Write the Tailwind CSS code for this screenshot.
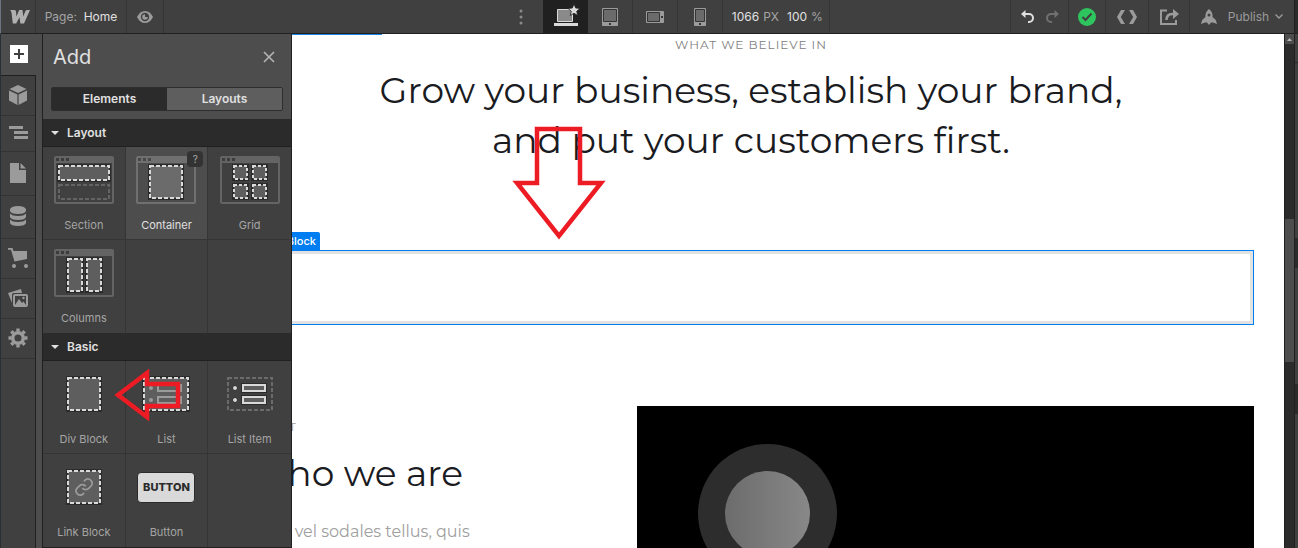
<!DOCTYPE html>
<html lang="en">

<head>
    <meta charset="UTF-8">
    <meta name="viewport" content="width=device-width, initial-scale=1.0">
    <title>Designer - Home</title>
    <script src="https://cdn.jsdelivr.net/npm/@tailwindcss/browser@4"></script>
</head>

<body class="h-screen overflow-hidden flex flex-col bg-[#404040] font-['Inter',sans-serif] text-xs text-[#e0e0e0]">
    <!-- Top bar -->
    <header class="flex h-[34px] shrink-0 border-b border-[#202020] border-l-1 border-l-[#6b7480] bg-[#404040]">
        <button class="flex w-[35px] items-center justify-center border-r border-[#353535] pl-1" aria-label="Menu">
            <svg class="h-4 w-5" viewBox="0 0 20 16" fill="#b0b0b0"><path d="M0 1h4.500q1.300 0 1.500 1.500l.4 5 2.800-6.500h3.300l.8 6.500 2-5.200Q16.100 1 17.500 1H20l-6 13.500h-3.600l-.9-6.200-3.300 6.200H2.800L1.600 4.200Q1.400 2.100 0 1z"/></svg>
        </button>
        <button class="w-[91px] border-r border-[#353535]"><span class="text-[#a5a5a5]">Page:</span>&nbsp; Home</button>
        <button class="flex w-[37px] items-center justify-center border-r border-[#353535]" aria-label="Preview">
            <svg class="h-3 w-4" viewBox="0 0 16 12"><path d="M0 6Q3 0 8 0t8 6q-3 6-8 6T0 6z" fill="#9b9b9b"/><circle cx="8" cy="6" r="4.200" fill="#404040"/><path d="M8 3.200a2.800 2.800 0 1 0 2.800 2.800H8z" fill="#9b9b9b"/></svg>
        </button>
        <div class="flex grow-[19] basis-0 items-center justify-end">
            <button class="mr-5" aria-label="More">
                <svg class="h-4 w-1" viewBox="0 0 4 16" fill="#8a8a8a"><circle cx="2" cy="2" r="1.500"/><circle cx="2" cy="8" r="1.500"/><circle cx="2" cy="14" r="1.500"/></svg>
            </button>
        </div>
        <button class="flex w-[45px] items-center justify-center bg-[#202020]" aria-label="Desktop">
            <svg class="mb-1 h-[22px] w-7" viewBox="0 0 28 22"><path d="M5.500 5.500h15v12h-15z" fill="#8a8a8a" stroke="#d9d9d9"/><path d="M2 19h24v3H2z" fill="#d9d9d9"/><path d="m22 0 1.700 4 4.300.4-3.300 2.900 1 4.200-3.700-2.200-3.700 2.200 1-4.200L16 4.400l4.300-.4z" fill="#d9d9d9" stroke="#202020" stroke-width=".8"/></svg>
        </button>
        <button class="flex w-[45px] items-center justify-center border-r border-[#353535]" aria-label="Tablet">
            <svg class="h-[18px] w-4" viewBox="0 0 16 18"><rect width="16" height="18" rx="1" fill="#9b9b9b"/><path d="M1.500 1.500h13v12h-13z" fill="#6b6b6b" stroke="#353535"/><path d="M7 15h2v2H7z" fill="#353535"/></svg>
        </button>
        <button class="flex w-[45px] items-center justify-center border-r border-[#353535]" aria-label="Mobile landscape">
            <svg class="h-3 w-[18px]" viewBox="0 0 18 12"><rect width="18" height="12" rx="1" fill="#9b9b9b"/><path d="M1.500 1.500h12v9h-12z" fill="#6b6b6b" stroke="#353535"/><path d="M15 5h2v2h-2z" fill="#353535"/></svg>
        </button>
        <button class="flex w-[45px] items-center justify-center border-r border-[#353535]" aria-label="Mobile portrait">
            <svg class="h-[18px] w-3" viewBox="0 0 12 18"><rect width="12" height="18" rx="1" fill="#9b9b9b"/><path d="M1.500 1.500h9v12h-9z" fill="#6b6b6b" stroke="#353535"/><path d="M5 15h2v2H5z" fill="#353535"/></svg>
        </button>
        <button class="flex w-[107px] items-center justify-center gap-1 border-r border-[#353535] pl-0.5">
            <span>1066</span><span class="text-[#a5a5a5]">PX</span>
            <span class="ml-1">100</span><span class="text-[#a5a5a5]">%</span>
        </button>
        <div class="grow-[9] basis-0 border-r border-[#353535]"></div>
        <div class="flex w-[58px] items-center justify-center gap-3 border-r border-[#353535]">
            <button aria-label="Undo">
                <svg class="h-[13px] w-[13px]" viewBox="0 0 13 13"><path d="M3 4h5a4 4 0 0 1 0 8H7" fill="none" stroke="#e0e0e0" stroke-width="2"/><path d="M0 4l4.500-4v8z" fill="#e0e0e0"/></svg>
            </button>
            <button aria-label="Redo">
                <svg class="h-[13px] w-[13px]" viewBox="0 0 13 13"><path d="M10 4H5a4 4 0 0 0 0 8h1" fill="none" stroke="#707070" stroke-width="2"/><path d="M13 4L8.500 0v8z" fill="#707070"/></svg>
            </button>
        </div>
        <button class="flex w-[37px] items-center justify-center border-r border-[#353535]" aria-label="Saved">
            <svg class="h-[18px] w-[18px]" viewBox="0 0 18 18"><circle cx="9" cy="9" r="9" fill="#2fc55e"/><path d="M4.500 9l3 3 6-6.500" fill="none" stroke="#404040" stroke-width="2"/></svg>
        </button>
        <button class="flex w-[43px] items-center justify-center border-r border-[#353535]" aria-label="Export code">
            <svg class="h-[14px] w-5" viewBox="0 0 20 14" fill="#9b9b9b"><path d="M4 0h4L3.800 7 8 14H4L0 7zM16 0h-4l4.200 7-4.200 7h4l4-7z"/></svg>
        </button>
        <button class="flex w-[41px] items-center justify-center border-r border-[#353535]" aria-label="Share">
            <svg class="h-4 w-[19px]" viewBox="0 0 19 16"><path d="M7 1.500H1V15h15v-4" fill="none" stroke="#9b9b9b" stroke-width="2"/><path d="M6.500 11q0-6 6-6H14" fill="none" stroke="#9b9b9b" stroke-width="2.500"/><path d="M13 0l6 5-6 5z" fill="#9b9b9b"/></svg>
        </button>
        <button class="flex w-[104px] items-center justify-center text-[#9b9b9b]">
            <svg class="h-4 w-4" viewBox="0 0 16 16" fill="#9b9b9b"><path d="M8 0q4 3 3.500 8l3.300 3 1.200 4-4-1.500H10L8 16l-2-2.500H4L0 15l1.200-4 3.300-3Q4 3 8 0z"/><circle cx="8" cy="6" r="1.500" fill="#404040"/></svg>
            <span class="ml-[11px]">Publish</span>
            <svg class="ml-1.5 h-[5px] w-2" viewBox="0 0 8 5"><path d="M.5.500L4 4 7.500.500" fill="none" stroke="#9b9b9b" stroke-width="1.300"/></svg>
        </button>
        <div class="w-1 border-l border-[#202020] bg-[#2b2b2b]"></div>
    </header>

    <div class="flex min-h-0 grow">
        <!-- Left rail -->
        <nav class="flex w-[42px] shrink-0 flex-col border-l border-[#2a2f36] bg-[#4d4d4d]">
            <button class="flex h-[41px] w-[35px] shrink-0 items-center justify-center pb-0.5" aria-label="Add elements">
                <svg class="h-[18px] w-[18px]" viewBox="0 0 18 18"><path fill="#fff" d="M0 0h18v18H0z"/><path d="M9 4v10M4 9h10" stroke="#404040" stroke-width="2"/></svg>
            </button>
            <div class="flex w-[35px] grow flex-col border-t border-r border-[#202020] bg-[#404040]">
                <button class="flex h-10 items-center justify-center border-b border-[#333] pb-0.5" aria-label="Symbols">
                    <svg class="h-5 w-[18px]" viewBox="0 0 18 20" fill="#9b9b9b"><path d="M9 0l8.500 4L9 8 .5 4zM0 5.500l8.400 4V20L0 15.500zM18 5.500l-8.400 4V20l8.400-4.500z"/></svg>
                </button>
                <button class="flex h-9 items-center justify-center border-b border-[#333] pb-0.5" aria-label="Navigator">
                    <svg class="h-[13px] w-[19px]" viewBox="0 0 19 13" fill="#9b9b9b"><path d="M0 0h14v3H0zM5 5h14v3H5zM5 10h14v3H5z"/></svg>
                </button>
                <button class="flex h-11 items-center justify-center border-b border-[#333] pb-0.5" aria-label="Pages">
                    <svg class="h-5 w-4" viewBox="0 0 16 20" fill="#9b9b9b"><path d="M0 0h9v7h7v13H0zM10.500 0L16 5.500h-5.500z"/></svg>
                </button>
                <button class="flex h-[43px] items-center justify-center border-b border-[#333] pb-0.5" aria-label="CMS">
                    <svg class="h-5 w-4" viewBox="0 0 16 20" fill="#9b9b9b"><ellipse cx="8" cy="3.500" rx="8" ry="3.500"/><path d="M0 3.500h16V5q-1 3-8 3T0 5zM0 7.500Q2 10 8 10t8-2.500V11q-1 3-8 3t-8-3zM0 13.500Q2 16 8 16t8-2.500V17q-1 3-8 3t-8-3z"/></svg>
                </button>
                <button class="flex h-10 items-center justify-center border-b border-[#333] pb-0.5" aria-label="Ecommerce">
                    <svg class="h-5 w-5" viewBox="0 0 20 20" fill="#9b9b9b"><path d="M0 0h4.500l1 3H19v8L6.500 13.500 3 1.700H0z"/><circle cx="6" cy="18" r="2"/><circle cx="18" cy="18" r="2"/></svg>
                </button>
                <button class="flex h-10 items-center justify-center border-b border-[#333] pb-0.5" aria-label="Assets">
                    <svg class="h-[18px] w-5" viewBox="0 0 20 18"><path d="M0 4L13 0l1 4H5.500Q4 4 4 5.500V14z" fill="#9b9b9b"/><rect x="6" y="6" width="13" height="11" rx="1" fill="none" stroke="#9b9b9b" stroke-width="2"/><path d="M7 16l4-6 3 4 1.500-1.500L18 16z" fill="#9b9b9b"/><circle cx="15.500" cy="9" r="1.200" fill="#9b9b9b"/></svg>
                </button>
                <button class="flex h-10 items-center justify-center border-b border-[#333] pb-0.5" aria-label="Settings">
                    <svg class="h-5 w-5" viewBox="-10 -10 20 20"><circle r="5.300" fill="none" stroke="#9b9b9b" stroke-width="3.500"/><path d="M0-9.500v3M0 9.500v-3M-9.500 0h3M9.500 0h-3M-6.700-6.700l2 2M6.700 6.700l-2-2M-6.700 6.700l2-2M6.700-6.700l-2 2" stroke="#9b9b9b" stroke-width="3.400"/></svg>
                </button>
            </div>
        </nav>

        <!-- Add panel -->
        <aside class="relative z-10 w-[250px] shrink-0 border-x border-[#202020] bg-[#404040]">
            <div class="bg-[#4d4d4d] px-2 pt-2 pb-2">
                <div class="flex h-[30px] items-center justify-between px-0.5">
                    <h2 class="text-xl">Add</h2>
                    <button class="mr-1.5" aria-label="Close">
                        <svg class="h-3 w-3" viewBox="0 0 12 12"><path d="M1 1l10 10M11 1L1 11" stroke="#b5b5b5" stroke-width="1.600"/></svg>
                    </button>
                </div>
                <div class="mt-[15px] grid h-6 grid-cols-2 overflow-hidden rounded-xs border border-[#2e2e2e] font-semibold">
                    <button class="bg-[#2b2b2b]">Elements</button>
                    <button class="bg-[#5e5e5e]">Layouts</button>
                </div>
            </div>

            <button class="flex h-7 w-full items-center gap-2 border-b border-[#202020] bg-[#2b2b2b] pl-2 font-semibold">
                <svg class="h-1 w-2" viewBox="0 0 8 4" fill="#e0e0e0"><path d="M0 0h8L4 4z"/></svg>
                Layout
            </button>
            <div class="grid grid-cols-3 text-[11px] leading-4 text-[#a5a5a5]">
                <button class="flex h-[93px] flex-col items-center border-r border-b border-[#353535] pt-[9px]">
                    <svg class="h-12 w-[60px]" viewBox="0 0 60 48"><rect x="1" y="1" width="58" height="46" rx="1" fill="none" stroke="#646464" stroke-width="2"/><path d="M1 1h58v6H1z" fill="#646464"/><path d="M2 2h3v3H2zM7 2h3v3H7zM12 2h3v3h-3z" fill="#3c3c3c"/><path d="M3 8h54v18H3z" fill="#2b2b2b"/><path d="M5 10h50v14H5z" fill="#5e5e5e" stroke="#d9d9d9" stroke-width="2" stroke-dasharray="4 2"/><path d="M5 29h50v14H5z" fill="none" stroke="#646464" stroke-width="2" stroke-dasharray="4 2"/></svg>
                    <span class="mt-[13px]">Section</span>
                </button>
                <button class="relative flex h-[93px] flex-col items-center border-r border-b border-[#353535] bg-[#4d4d4d] pt-[9px] text-[#e0e0e0]">
                    <svg class="h-12 w-[60px]" viewBox="0 0 60 48"><rect x="1" y="1" width="58" height="46" rx="1" fill="none" stroke="#707070" stroke-width="2"/><path d="M1 1h58v6H1z" fill="#707070"/><path d="M2 2h3v3H2zM7 2h3v3H7zM12 2h3v3h-3z" fill="#484848"/><path d="M12 8h36v36H12z" fill="#2b2b2b"/><path d="M14 10h32v32H14z" fill="#6b6b6b" stroke="#d9d9d9" stroke-width="2" stroke-dasharray="4 2"/></svg>
                    <span class="mt-[13px]">Container</span>
                    <span class="absolute top-1 right-1 h-4 w-4 rounded-sm bg-[#333] text-[10px] text-[#a5a5a5]">?</span>
                </button>
                <button class="flex h-[93px] flex-col items-center border-b border-[#353535] pt-[9px]">
                    <svg class="h-12 w-[60px]" viewBox="0 0 60 48"><rect x="1" y="1" width="58" height="46" rx="1" fill="none" stroke="#646464" stroke-width="2"/><path d="M1 1h58v6H1z" fill="#646464"/><path d="M2 2h3v3H2zM7 2h3v3H7zM12 2h3v3h-3z" fill="#3c3c3c"/><path d="M12 8h17v17H12zM31 8h17v17H31zM12 27h17v17H12zM31 27h17v17H31z" fill="#2b2b2b"/><path d="M14 10h13v13H14zM33 10h13v13H33zM14 29h13v13H14zM33 29h13v13H33z" fill="#5e5e5e" stroke="#d9d9d9" stroke-width="2" stroke-dasharray="3 2"/></svg>
                    <span class="mt-[13px]">Grid</span>
                </button>
                <button class="flex h-[93px] flex-col items-center border-r border-[#353535] pt-[9px]">
                    <svg class="h-12 w-[60px]" viewBox="0 0 60 48"><rect x="1" y="1" width="58" height="46" rx="1" fill="none" stroke="#646464" stroke-width="2"/><path d="M1 1h58v6H1z" fill="#646464"/><path d="M2 2h3v3H2zM7 2h3v3H7zM12 2h3v3h-3z" fill="#3c3c3c"/><path d="M12 8h18v36H12zM31 8h18v36H31z" fill="#2b2b2b"/><path d="M14 10h14v32H14zM33 10h14v32H33z" fill="#5e5e5e" stroke="#d9d9d9" stroke-width="2" stroke-dasharray="4 2"/></svg>
                    <span class="mt-[13px]">Columns</span>
                </button>
                <div class="border-r border-[#353535]"></div>
                <div></div>
            </div>

            <button class="flex h-7 w-full items-center gap-2 border-b border-[#202020] bg-[#2b2b2b] pl-2 font-semibold">
                <svg class="h-1 w-2" viewBox="0 0 8 4" fill="#e0e0e0"><path d="M0 0h8L4 4z"/></svg>
                Basic
            </button>
            <div class="relative grid grid-cols-3 border-b border-[#202020] text-[11px] leading-4 text-[#a5a5a5]">
                <button class="flex h-[93px] flex-col items-center border-r border-b border-[#353535] pt-[9px]">
                    <svg class="h-12 w-[60px]" viewBox="0 0 60 48"><path d="M12 6h36v36H12z" fill="#2b2b2b"/><path d="M14 8h32v32H14z" fill="#5e5e5e" stroke="#d9d9d9" stroke-width="2" stroke-dasharray="4 2"/></svg>
                    <span class="mt-[13px]">Div Block</span>
                </button>
                <button class="flex h-[93px] flex-col items-center border-r border-b border-[#353535] pt-[9px]">
                    <svg class="h-12 w-[60px]" viewBox="0 0 60 48"><path d="M6 6h48v36H6z" fill="#2b2b2b"/><path d="M8 8h44v32H8z" fill="#5e5e5e" stroke="#d9d9d9" stroke-width="2" stroke-dasharray="4 2"/><circle cx="15" cy="18" r="2" fill="#9b9b9b"/><circle cx="15" cy="30" r="2" fill="#9b9b9b"/><path d="M22 15h23v6H22zM22 27h23v6H22z" fill="none" stroke="#9b9b9b" stroke-width="2"/></svg>
                    <span class="mt-[13px]">List</span>
                </button>
                <button class="flex h-[93px] flex-col items-center border-b border-[#353535] pt-[9px]">
                    <svg class="h-12 w-[60px]" viewBox="0 0 60 48"><path d="M8 8h44v32H8z" fill="none" stroke="#6b6b6b" stroke-width="2" stroke-dasharray="4 2"/><g stroke="#2b2b2b"><circle cx="15" cy="18" r="2.500" fill="#d9d9d9"/><circle cx="15" cy="30" r="2.500" fill="#d9d9d9"/></g><path d="M21 13h26v10H21zM21 25h26v10H21z" fill="#2b2b2b"/><path d="M23 15h22v6H23zM23 27h22v6H23z" fill="#5e5e5e" stroke="#d9d9d9" stroke-width="2"/></svg>
                    <span class="mt-[13px]">List Item</span>
                </button>
                <button class="flex h-[93px] flex-col items-center border-r border-[#353535] pt-[9px]">
                    <svg class="h-12 w-[60px]" viewBox="0 0 60 48"><path d="M12 6h36v36H12z" fill="#2b2b2b"/><path d="M14 8h32v32H14z" fill="#5e5e5e" stroke="#d9d9d9" stroke-width="2" stroke-dasharray="4 2"/><g transform="translate(20 14) scale(.84)" fill="none" stroke="#9b9b9b" stroke-width="2"><path d="M10 13a5 5 0 0 0 7.500.500l3-3a5 5 0 0 0-7-7l-1.700 1.700"/><path d="M14 11a5 5 0 0 0-7.500-.500l-3 3a5 5 0 0 0 7 7l1.700-1.700"/></g></svg>
                    <span class="mt-[13px]">Link Block</span>
                </button>
                <button class="flex h-[93px] flex-col items-center border-r border-[#353535] pt-[9px]">
                    <span class="flex h-12 items-center">
                        <span class="flex h-[31px] w-[58px] items-center justify-center rounded-sm border border-[#2b2b2b] bg-[#d9d9d9] font-extrabold text-[#2b2b2b]">BUTTON</span>
                    </span>
                    <span class="mt-[13px]">Button</span>
                </button>
                <div></div>
                <!-- Arrow pointing at Div Block -->
                <svg class="pointer-events-none absolute top-2 left-[71px] h-[52px] w-[68px]" viewBox="0 0 68 52"><path d="M4 26L33 4v11h31v22H33v11z" fill="none" stroke="#ed1c24" stroke-width="4.500"/></svg>
            </div>
        </aside>

        <!-- Canvas, partly covered by the add panel -->
        <main class="relative min-w-0 grow overflow-hidden bg-white font-['Montserrat','Inter',sans-serif] text-[#1a1b1f]">
            <div class="absolute top-0 left-0 h-px w-[90px] bg-[#1a85e8]"></div>
            <div class="-ml-[74px] px-[30px]">
                <section class="pt-[3px] text-center">
                    <p class="text-xs leading-4 tracking-[1px] text-[#808080]">WHAT WE BELIEVE IN</p>
                    <h1 class="mt-3 text-4xl leading-[50px] font-normal">Grow your business, establish your brand,<br>and put your customers first.</h1>
                </section>
                <div class="mt-[67px] flex">
                    <span class="h-[18px] w-[72px] rounded-t-xs bg-[#007df0] pr-1 text-right font-['Inter',sans-serif] text-[11px] leading-[18px] font-medium text-white">Div Block</span>
                </div>
                <div class="h-[75px] border border-[#007df0]">
                    <div class="h-full border-3 border-[#e2e2e2]"></div>
                </div>
                <section class="mt-[81px] grid grid-cols-[389px_1fr]">
                    <div class="pt-[13px]">
                        <p class="text-xs leading-4 tracking-[1px] text-[#a0a0a0]">ABOUT</p>
                        <h2 class="mt-[13px] text-4xl leading-[50px] font-normal">Who we are</h2>
                        <p class="mt-5 text-base leading-7 font-normal text-[#a0a0a0]">Proin vel sodales tellus, quis</p>
                    </div>
                    <div class="h-[360px] bg-black pt-[38px] pl-[61px]">
                        <svg class="h-[139px] w-[139px]" viewBox="0 0 139 139">
                            <defs><linearGradient id="disc"><stop offset="0" stop-color="#6c6c6c"/><stop offset="1" stop-color="#888"/></linearGradient></defs>
                            <circle cx="69.500" cy="69.500" r="69.500" fill="#2d2d2d"/>
                            <circle cx="69.500" cy="69.500" r="42.500" fill="url(#disc)"/>
                        </svg>
                    </div>
                </section>
            </div>
            <!-- Arrow pointing at the selected block -->
            <svg class="pointer-events-none absolute top-[92px] left-[219px] h-[114px] w-24" viewBox="0 0 96 114"><path d="M26 3h43v54h21l-42 53L6 57h20z" fill="none" stroke="#ed1c24" stroke-width="4.500"/></svg>
        </main>

        <!-- Scrollbar -->
        <div class="flex w-[10px] shrink-0 flex-col border-l border-[#202020] bg-[#2b2b2b]">
            <div class="flex h-[10px] shrink-0 items-center justify-center bg-[#4d4d4d]">
                <svg class="h-[3px] w-[5px]" viewBox="0 0 5 3" fill="#b5b5b5"><path d="M0 3h5L2.500 0z"/></svg>
            </div>
            <div class="mt-[175px] h-[143px] bg-[#4d4d4d]"></div>
        </div>
        <div class="w-1 shrink-0 border-l border-[#202020] bg-[#404040]">
            <div class="h-[29px] border-b border-[#2b2b2b]"></div>
            <div class="mt-[175px] h-[30px] bg-[#2b2b2b]"></div>
            <div class="mt-[116px] h-[30px] bg-[#2b2b2b]"></div>
        </div>
    </div>
</body>

</html>
